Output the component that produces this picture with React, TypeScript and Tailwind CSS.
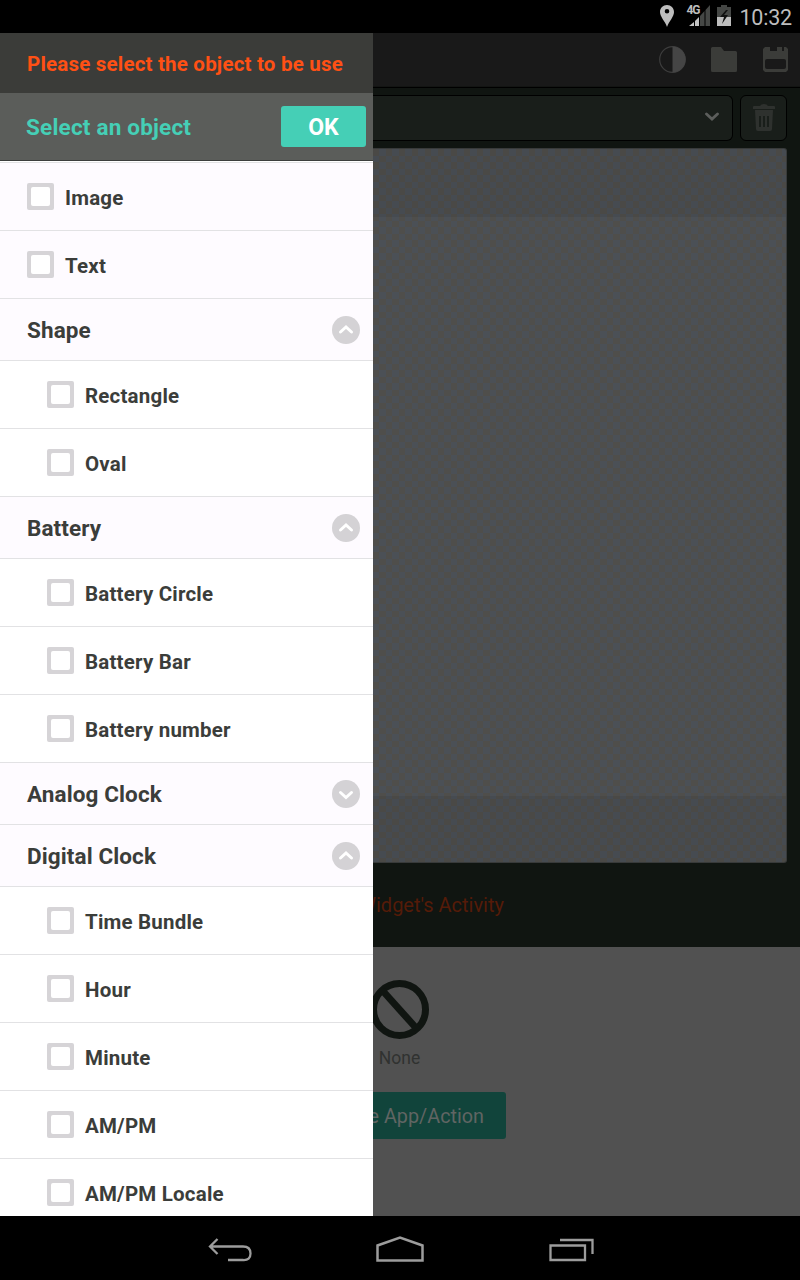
import React from "react";

type Row =
  | { kind: "item"; label: string; nested?: boolean }
  | { kind: "group"; label: string; open: boolean };

const rows: Row[] = [
  { kind: "item", label: "Image" },
  { kind: "item", label: "Text" },
  { kind: "group", label: "Shape", open: true },
  { kind: "item", label: "Rectangle", nested: true },
  { kind: "item", label: "Oval", nested: true },
  { kind: "group", label: "Battery", open: true },
  { kind: "item", label: "Battery Circle", nested: true },
  { kind: "item", label: "Battery Bar", nested: true },
  { kind: "item", label: "Battery number", nested: true },
  { kind: "group", label: "Analog Clock", open: false },
  { kind: "group", label: "Digital Clock", open: true },
  { kind: "item", label: "Time Bundle", nested: true },
  { kind: "item", label: "Hour", nested: true },
  { kind: "item", label: "Minute", nested: true },
  { kind: "item", label: "AM/PM", nested: true },
  { kind: "item", label: "AM/PM Locale", nested: true },
];

function StatusBar() {
  return (
    <div className="flex h-[33px] shrink-0 items-start justify-end bg-black pr-[8px]">
      <svg className="mt-[5px] mr-[13px] h-[22px] w-[14px]" viewBox="0 0 14 22">
        <path fill="#bdbdbd" fillRule="evenodd" d="M7 0C3 0 0 3 0 7c0 5 5 9 7 15 2-6 7-10 7-15 0-4-3-7-7-7Zm0 4a2.300 2.300 0 1 1 0 4.600A2.300 2.300 0 0 1 7 4Z" />
      </svg>
      <div className="relative mt-[5px] mr-[6px] h-[21px] w-[24px]">
        <svg className="h-[21px] w-[24px]" viewBox="0 0 24 21">
          <path fill="#454745" d="M23 0v21h-4.500V5ZM17.500 6v15h-4.500V11Z" />
          <path fill="#c4c4c4" d="M12 12v9H8v-5ZM7 17v4H2Z" />
        </svg>
        <span className="absolute top-0 -left-px text-[12px] leading-[11px] font-bold tracking-[-1px] text-[#bdbdbd]">4G</span>
      </div>
      <svg className="mt-[5px] mr-[8px] h-[21px] w-[14px]" viewBox="0 0 14 21">
        <path fill="#454745" d="M4 0h6v2h4v10H0V2h4Z" />
        <path fill="#bdbdbd" d="M0 12h14v9H0Z" />
        <path fill="#101010" d="M9 5 3 12h4l-2 7 6-9H7l4-5Z" />
      </svg>
      <span className="mt-[5px] text-[21.500px] leading-[25px] tracking-[-0.200px] text-[#bdbdbd]">10:32</span>
    </div>
  );
}

function Checkbox() {
  return <span className="h-[27px] w-[27px] shrink-0 rounded-[2px] bg-[#d6d4d7] p-[4px]"><span className="block h-full w-full rounded-[2px] bg-white" /></span>;
}

function ListRow({ row }: { row: Row }) {
  if (row.kind === "group") {
    return (
      <div className="flex h-[62px] shrink-0 items-center justify-between border-b border-[#e2e2e4] bg-[#fefbff] pr-[13px] pl-[27px]">
        <span className="mt-[3px] text-[22.500px] font-bold tracking-[0.100px] text-[#3b3d3a]">{row.label}</span>
        <svg className="h-7 w-7" viewBox="0 0 28 28" fill="none">
          <circle cx="14" cy="14" r="14" fill="#d4d2d5" />
          <path d={row.open ? "m8.500 16 5.500-5 5.500 5" : "m8.500 12.500 5.500 5 5.500-5"} stroke="#fff" strokeWidth="3" strokeLinecap="round" />
        </svg>
      </div>
    );
  }
  return (
    <div className={"flex h-[68px] shrink-0 items-center gap-[11px] border-b border-[#e2e2e4] " + (row.nested ? "bg-white pl-[47px]" : "bg-[#fefbff] pl-[27px]")}>
      <Checkbox />
      <span className="mt-[4px] text-[20.500px] font-bold tracking-[0.200px] text-[#3b3d3a]">{row.label}</span>
    </div>
  );
}

function Drawer() {
  return (
    <aside className="flex w-[373px] shrink-0 flex-col overflow-hidden bg-white">
      <div className="flex h-[60px] shrink-0 items-center bg-[#3b3c39] pt-[2px] pl-[27px]">
        <span className="text-[20.500px] font-bold tracking-[0.200px] whitespace-nowrap text-[#ff5014]">Please select the object to be use</span>
      </div>
      <div className="flex h-[68px] shrink-0 items-center justify-between border-b border-[#3c3e3d] bg-[#5b5d5a] pr-[7px] pl-[26px]">
        <span className="mt-[3px] text-[22.500px] font-bold tracking-[0.200px] whitespace-nowrap text-[#45cfb6]">Select an object</span>
        <button className="h-[41px] w-[85px] rounded-[3px] bg-[#45cfb6] pt-[3px] text-[23px] font-bold text-white">OK</button>
      </div>
      <div className="h-[2px] shrink-0 border-b border-[#e2e2e4] bg-white" />
      {rows.map((row) => <ListRow key={row.label} row={row} />)}
    </aside>
  );
}

function Editor() {
  return (
    <main className="flex w-[427px] flex-col overflow-hidden bg-[#101511]">
      <div className="flex h-[53px] shrink-0 justify-end bg-[#191919] pt-[13px] pr-[12px]">
        <svg className="mr-[25px] h-[27px] w-[27px]" viewBox="0 0 27 27">
          <circle cx="13.500" cy="13.500" r="12.800" fill="none" stroke="#3d3d3d" strokeWidth="1.200" />
          <path d="M13.500.5a13 13 0 0 1 0 26Z" fill="#454545" />
        </svg>
        <svg className="mt-px mr-[26px] h-[25px] w-[26px]" viewBox="0 0 26 25">
          <path d="M1.500 0H10l3 4h11.500q1.500 0 1.500 1.500v18q0 1.500-1.500 1.500h-23Q0 25 0 23.500v-22Q0 0 1.500 0Z" fill="#3b3c39" />
        </svg>
        <svg className="mt-px h-[25px] w-[25px]" viewBox="0 0 25 25">
          <path fillRule="evenodd" d="M2 0h5v4h14V0h2l2 2v21l-2 2H2l-2-2V2ZM4 12q-2 0-2 2v6q0 2 2 2h17q2 0 2-2v-6q0-2-2-2Z" fill="#3b3c39" />
          <path d="M14 0h5v4h-5Z" fill="#3b3c39" />
        </svg>
      </div>
      <div className="h-[2px] shrink-0 border-b border-black bg-[#131513]" />
      <div className="flex h-[60px] shrink-0 items-start gap-[7px] pt-[7px] pr-[13px]">
        <div className="flex h-[46px] flex-1 items-center justify-end rounded-r-[6px] border border-l-0 border-black bg-[#191e1a] pr-[13px]">
          <svg className="mb-[3px] h-[10px] w-[14px]" viewBox="0 0 14 10" fill="none"><path d="m1.500 2 5.500 5 5.500-5" stroke="#5c5e5c" strokeWidth="2.800" strokeLinecap="round" /></svg>
        </div>
        <div className="flex h-[46px] w-[47px] items-center justify-center rounded-[6px] border border-black bg-[#191e1a] pb-[2px]">
          <svg className="h-[27px] w-[22px]" viewBox="0 0 22 27">
            <path d="M1 2h6q1-2 4-2t4 2h6q1 0 1 1v2H0V3q0-1 1-1Z" fill="#2e312e" />
            <path fillRule="evenodd" d="M2 6h18l-1 19q0 2-2 2H5q-2 0-2-2ZM6 12v11h2V12Zm4 0v11h2V12Zm4 0v11h2V12Z" fill="#2e312e" />
          </svg>
        </div>
      </div>
      <div className="mr-[13px] flex h-[715px] shrink-0 flex-col overflow-hidden rounded-r-[3px] border-y border-r border-[#383a3a] bg-[conic-gradient(from_0deg_at_6px_7px,#464b51_25%,#4a4946_0_50%,#464b51_0_75%,#4a4946_0)] bg-[length:13px_13px]">
        <div className="mt-[68px] h-[579px] bg-white/3" />
      </div>
      <div className="flex h-[84px] shrink-0 items-center justify-end pr-[296px]">
        <span className="text-[20px] whitespace-nowrap text-[#551b08]">Widget's Activity</span>
      </div>
      <div className="flex h-[269px] shrink-0 flex-col bg-[#515151]">
        <div className="flex w-[53px] flex-col items-center">
          <svg className="mt-[33px] -ml-px h-[59px] w-[59px] shrink-0" viewBox="0 0 59 59" fill="none">
            <circle cx="29.500" cy="29.500" r="26" stroke="#101511" strokeWidth="7" />
            <path d="m12 10 35 39" stroke="#101511" strokeWidth="7" />
          </svg>
          <span className="mt-[8px] text-[17.500px] leading-[22px] text-[#303230]">None</span>
        </div>
        <div className="mt-[23px] flex h-[47px] w-[133px] items-center justify-end rounded-r-[3px] bg-[#11443b] pt-[3px] pr-[22px]">
          <span className="text-[19.800px] whitespace-nowrap text-[#606563]">e App/Action</span>
        </div>
      </div>
    </main>
  );
}

function NavBar() {
  return (
    <nav className="flex h-16 shrink-0 bg-black pl-[208px]">
      <svg className="mt-[22px] h-[24px] w-[44px]" viewBox="0 0 44 24" fill="none" stroke="#9c9c9c" strokeWidth="2.300"><path d="M9.500 1 2 8.500 9.500 16M2 8.500h33q7.500 0 7.500 7t-7.500 6.500H20" /></svg>
      <svg className="mt-[20px] ml-[124px] h-[26px] w-[48px]" viewBox="0 0 48 26" fill="none" stroke="#9c9c9c" strokeWidth="2.500"><path d="M1.500 24.500v-15L24 1.500l22.500 8v15Z" /></svg>
      <svg className="mt-[22px] ml-[125px] h-[24px] w-[45px]" viewBox="0 0 45 24" fill="none" stroke="#9c9c9c" strokeWidth="2.300"><path d="M1.500 7.500h34.500v14.500H1.500ZM11 2h32.500V16" /></svg>
    </nav>
  );
}

export default function App() {
  return (
    <div className="flex h-[1280px] w-[800px] flex-col overflow-hidden bg-black font-['Roboto',sans-serif]">
      <StatusBar />
      <div className="flex h-[1183px] shrink-0 overflow-hidden">
        <Drawer />
        <Editor />
      </div>
      <NavBar />
    </div>
  );
}
